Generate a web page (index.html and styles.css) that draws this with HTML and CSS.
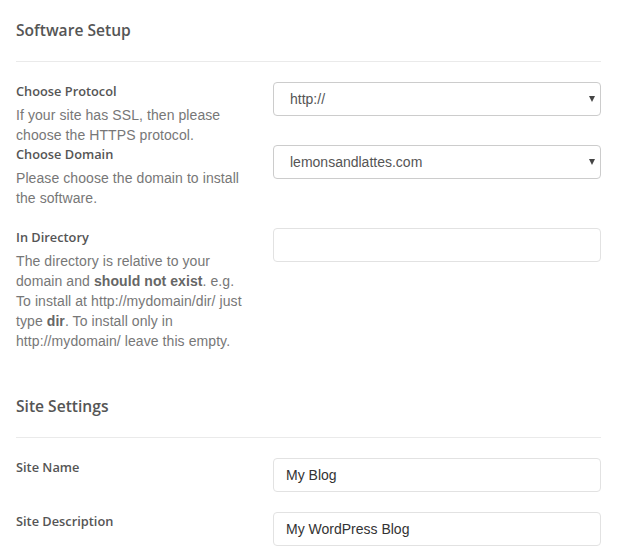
FILE: index.html
```html
<!DOCTYPE html>
<html>
<head>
<meta charset="utf-8">
<link rel="stylesheet" href="styles.css">
</head>
<body>
<div class="page">
  <section class="section">
    <h3 class="section-title first">Software Setup</h3>
    <div class="row row-tight">
      <div class="info">
        <label class="label">Choose Protocol</label>
        <p class="desc">If your site has SSL, then please choose the HTTPS protocol.</p>
      </div>
      <div class="field select-wrap">
        <select class="control select"><option>http://</option></select>
      </div>
    </div>
    <div class="row">
      <div class="info">
        <label class="label">Choose Domain</label>
        <p class="desc">Please choose the domain to install the software.</p>
      </div>
      <div class="field select-wrap">
        <select class="control select"><option>lemonsandlattes.com</option></select>
      </div>
    </div>
    <div class="row">
      <div class="info">
        <label class="label">In Directory</label>
        <p class="desc">The directory is relative to your domain and <b>should not exist</b>. e.g. To install at http://mydomain/dir/ just type <b>dir</b>. To install only in http://mydomain/ leave this empty.</p>
      </div>
      <div class="field">
        <input class="control input" type="text" value="">
      </div>
    </div>
  </section>
  <section class="section">
    <h3 class="section-title">Site Settings</h3>
    <div class="row">
      <div class="info">
        <label class="label">Site Name</label>
      </div>
      <div class="field">
        <input class="control input" type="text" value="My Blog">
      </div>
    </div>
    <div class="row">
      <div class="info">
        <label class="label">Site Description</label>
      </div>
      <div class="field">
        <input class="control input" type="text" value="My WordPress Blog">
      </div>
    </div>
  </section>
</div>
</body>
</html>
```
FILE: styles.css
```css
html, body {
  margin: 0;
  padding: 0;
  background: #fff;
}
.page {
  padding: 0 20px 0 16px;
  font-family: "Liberation Sans", Arial, sans-serif;
}
.section-title {
  font-family: "Open Sans", sans-serif;
  font-weight: 600;
  font-size: 15.6px;
  line-height: 20px;
  color: #555;
  margin: 45px 0 20px;
  padding-bottom: 21px;
  border-bottom: 1px solid #eaeaea;
}
.section-title.first {
  margin-top: 20px;
}
.row {
  display: grid;
  grid-template-columns: 236px 1fr;
  column-gap: 21px;
  margin-bottom: 20px;
}
.row-tight {
  margin-bottom: 0;
}
.label {
  display: block;
  font-family: "Open Sans", sans-serif;
  font-weight: 600;
  font-size: 12.8px;
  line-height: 18px;
  color: #555;
}
.desc {
  margin: 5px 0 0;
  font-size: 14px;
  line-height: 20px;
  letter-spacing: 0.08px;
  color: #777;
}
.desc b {
  color: #666;
}
.field {
  position: relative;
}
.control {
  display: block;
  box-sizing: border-box;
  width: 100%;
  height: 34px;
  margin: 0;
  font-family: "Liberation Sans", Arial, sans-serif;
  font-size: 14px;
  background: #fff;
  border-radius: 4px;
  outline: none;
}
.select {
  -webkit-appearance: none;
  appearance: none;
  border: 1px solid #ccc;
  padding: 0 24px 0 16px;
  color: #555;
}
.select-wrap::after {
  content: "";
  position: absolute;
  right: 6px;
  top: 14px;
  border-left: 3.5px solid transparent;
  border-right: 3.5px solid transparent;
  border-top: 6px solid #444;
  pointer-events: none;
}
.input {
  border: 1px solid #e2e2e2;
  padding: 0 12px;
  color: #333;
}
```
